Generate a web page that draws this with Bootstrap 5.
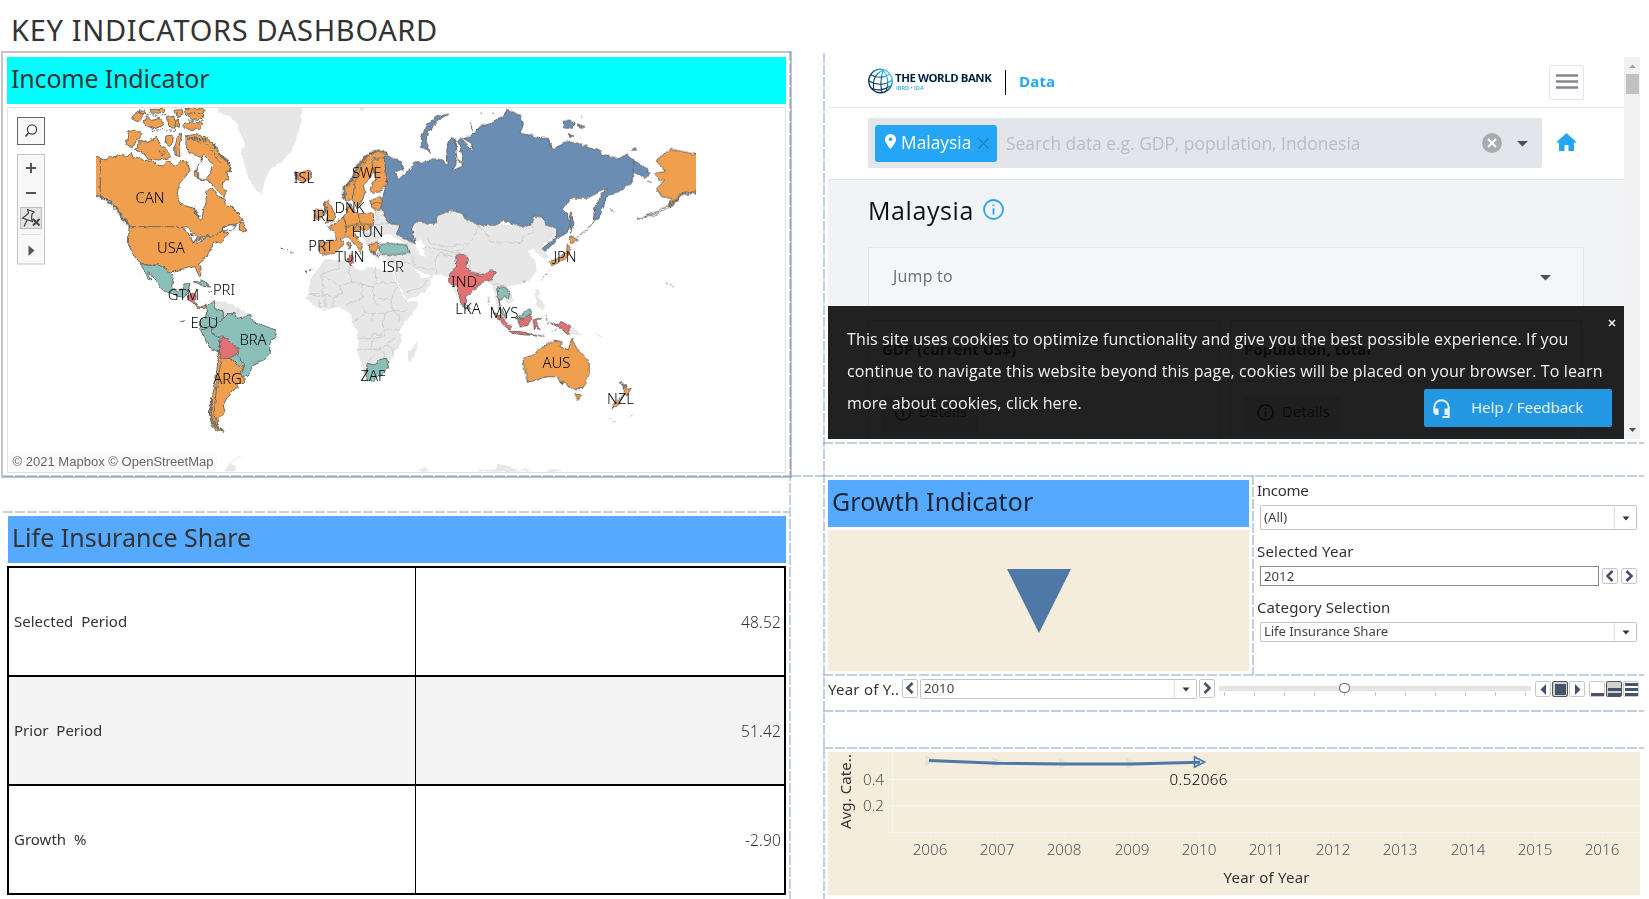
<!DOCTYPE html>
<html lang="en">
<head>
<meta charset="utf-8">
<title>Key Indicators Dashboard</title>
<link href="https://cdn.jsdelivr.net/npm/bootstrap@5.3.0/dist/css/bootstrap.min.css" rel="stylesheet">
<style>
  body { font-family: "Noto Sans", "Open Sans", sans-serif; color: #333; background: #fff; overflow: hidden; height: 899px; line-height: 1.2; }
  .page-title { font-size: 29px; height: 51px; padding: 12px 0 0 11px; margin: 0; font-weight: 400; line-height: 35px; white-space: nowrap; letter-spacing: .68px; }
  .board { display: grid; grid-template-columns: 789px 36px 1fr; height: 848px; }
  .dash-h { height: 2px; flex: none; background: repeating-linear-gradient(90deg, rgba(70,112,175,.33) 0 10px, transparent 10px 12px); }
  .dash-v { width: 2px; background: repeating-linear-gradient(180deg, rgba(70,112,175,.33) 0 10px, transparent 10px 12px); }
  .map-panel { width: 791px; height: 427px; margin-left: 1px; border: 2px solid #c3c5c8; padding: 4px 4px 0; flex: none; }
  .band { height: 47px; font-size: 25px; line-height: 43px; padding-left: 4px; white-space: nowrap; flex: none; }
  .band-cyan { background: #0ff; letter-spacing: -.18px; }
  .band-blue { background: #55a9ff; }
  .map-frame { height: 366px; margin-top: 3px; border: 1px solid #e2e2e2; display: block; width: 779px; }
  .life { margin: 3px 3px 0 8px; }
  .life-table { margin: 3px 3px 0 7px; width: 779px; border: 2px solid #000; font-size: 15px; flex: none; }
  .life-row { height: 109px; border-bottom: 2px solid #000; line-height: 107px; }
  .life-row:last-child { border-bottom: 0; height: 107px; }
  .life-row:nth-child(2) { background: #f4f4f4; }
  .life-name { width: 407px; border-right: 1px solid #000; padding-left: 5px; word-spacing: 4px; }
  .life-num { padding-right: 3px; font-weight: 300; color: #333; font-size: 15.5px; letter-spacing: .15px; line-height: 109px; }
  .right { padding-left: 3px; }
  .right > .dash-h { margin-left: -5px; margin-right: 5px; }
  .frame { height: 382px; margin-top: 6px; width: 812px; font-family: "Open Sans", sans-serif; flex: none; }
  .site { width: 796px; background: #f1f3f7; overflow: hidden; }
  .bar { width: 16px; background: #f1f1f1; }
  .thumb { width: 13px; height: 20px; background: #c1c1c1; margin-left: 2px; }
  .site-head { height: 51px; background: #fff; border-bottom: 1px solid #e3e6ea; padding: 0 40px; }
  .brand { font-size: 11.4px; font-weight: 700; color: #002244; line-height: 12px; white-space: nowrap; letter-spacing: -.44px; width: 95px; }
  .brand-sub { font-size: 5.6px; line-height: 6px; color: #2aa8e0; font-weight: 600; padding-left: 1px; }
  .rule { width: 1px; height: 25px; background: #000; margin-left: 15px; margin-right: 13px; }
  .data-link { font-size: 15px; font-weight: 700; color: #25a5f6; margin-top: -2px; letter-spacing: .15px; }
  .burger { width: 35px; height: 35px; border: 1px solid #e3e5e8; border-radius: 2px; }
  .searchrow { height: 72px; background: #fff; border-bottom: 1px solid #e3e6ea; padding: 10px 40px 0; }
  .searchbox { width: 674px; height: 50px; background: #e2e6eb; border-radius: 2px; padding-left: 7px; }
  .tag { width: 122px; height: 37px; background: #25a5f6; color: #fff; border-radius: 3px; font-size: 17.4px; font-weight: 500; padding-left: 9px; }
  .hint { font-size: 17.4px; color: #b9bdc0; margin-left: 9px; white-space: nowrap; }
  .country { height: 67px; padding: 0 40px; font-size: 25px; font-weight: 500; color: #111; letter-spacing: .6px; line-height: 60px; }
  .jump { margin: 0 40px; height: 59px; border: 1px solid #e3e8ec; border-bottom: 0; background: #f5f6f9; font-size: 16px; color: #666c70; padding: 0 32px 0 24px; border-radius: 2px 2px 0 0; line-height: 56px; letter-spacing: .25px; }
  .cookie { height: 134px; background: #212121; color: #f3f3f3; position: relative; font-size: 16px; }
  .cookie p { position: relative; margin: 0; padding: 17px 0 0 19px; line-height: 32px; white-space: nowrap; font-weight: 500; letter-spacing: .128px; }
  .under { position: absolute; inset: 0; }
  .help { position: absolute; right: 12px; bottom: 13px; width: 188px; height: 38px; background: #2497e2; border-radius: 2px; color: #eaf4fb; font-size: 15px; font-weight: 500; line-height: 37px; padding-left: 47px; }
  .help svg { position: absolute; left: 9px; top: 10px; }
  .growth { width: 421px; }
  .sand { background: #f4eddb; }
  .side { width: 392px; font-size: 15px; }
  .field-label { height: 21px; line-height: 21px; padding-left: 3px; }
  .pick { border: 1px solid #c6c6c6; border-radius: 2px; font-size: 13.2px; color: #444; background: #fff; padding-left: 3px; }
  .pick .drop { width: 22px; border-left: 1px solid #dedede; }
  .step { width: 16px; height: 16px; border: 1px solid #c6c6c6; border-radius: 2px; flex: none; display: block; }
  .yearrow { height: 34px; font-size: 15px; }
  svg text { font-family: "Noto Sans", sans-serif; }
  .lbl { font-size: 14.8px; fill: #000; font-weight: 300; text-anchor: middle; }
  .axis { font-size: 15.2px; font-weight: 300; fill: #555; text-anchor: middle; }
  .ctry path { stroke: #6b6b68; stroke-width: 3; stroke-linejoin: round; }
  .o { fill: #f09f4f; } .t { fill: #8bbfba; } .r { fill: #e37173; } .b { fill: #6b8db3; }
  .ctry path.w { fill: #fff; }
  .ctry path.ln { fill: none; }
  .ctry path.jag { fill: none; stroke-width: 9; stroke-dasharray: 6 2; }
  .land path { fill: #e7e7e7; }
  .land path.ln { fill: none; stroke: #c6c6c6; stroke-width: 2.4; }
  .land path.w { fill: #fff; }
</style>
</head>
<body>
<h1 class="page-title">KEY INDICATORS DASHBOARD</h1>
<main class="board">
  <section class="d-flex flex-column">
    <div class="map-panel">
      <div class="band band-cyan">Income Indicator</div>
      <svg class="map-frame" viewBox="8 108 777 364">
        <defs>
          <filter id="coast" x="-2%" y="-2%" width="104%" height="104%">
            <feTurbulence type="fractalNoise" baseFrequency=".2" numOctaves="2" seed="4"/>
            <feDisplacementMap in="SourceGraphic" scale="4" xChannelSelector="R" yChannelSelector="G"/>
          </filter>
          <clipPath id="world"><rect x="96" y="108" width="600" height="364"/></clipPath>
        </defs>
        <g class="land" filter="url(#coast)">
          <g transform="translate(80 100) scale(.33333)">
            <path d="M412 15H668L665 60 655 100 645 130 625 165 600 190 570 210 555 240 545 285 525 265 505 235 495 200 485 160 495 130 480 100 470 70 445 48 415 40zM835 15h20l-10 22z"/>
            <path d="M400 602 430 605 460 615 500 635 512 645 465 655 430 655 405 625z"/>
            <path class="ln" d="M433 655 430 635 465 655 475 635"/>
          </g>
          <g transform="translate(290 230) scale(.33333)">
            <path d="M85 115 105 88 150 90 175 85 190 110 215 125 235 110 310 125 320 160 335 190 350 215 385 212 375 240 345 275 330 300 335 335 310 375 298 400 290 420 270 440 235 455 222 440 215 400 200 360 205 310 185 275 185 255 150 230 105 240 80 235 50 205 55 180 65 140z"/>
            <path d="M380 335 383 350 365 400 352 395 355 365 370 350z"/>
            <path d="M837 285 860 300 882 320 850 312 837 312zM735 180l10 0 5 30 15 15-8 18-15-20-8-25zM905 305l35 15-5 4zM955 375l15 10zM385 724 395 715 410 715 418 724zM555 724l15-5 45 0 5-14 10-2 20 5 25 10 20 8zM690 724l10-8 10-3 12 11zM765 724l20-8 35 8z"/>
            <path class="ln" d="M145 90 150 115 125 120 95 135 100 190 60 192M100 135 150 170 155 190 130 200 128 230M150 170 185 153 215 163 218 205 165 225M185 153 175 110 190 110M215 163 250 172 252 215 265 225M257 110V158H320M215 163H232M250 172 257 158M265 205 300 210 320 170M300 210 310 240 290 250 250 250 245 270M310 240 350 245M218 225 225 250 205 265 185 275M225 250 250 250 M285 250 280 285 285 320 250 310 240 325 200 325M285 320 250 325 240 358 192 358M240 358H268L290 345 320 320M268 358 230 400M268 358 285 370 280 385M285 300 330 300M310 240 330 260 325 280M60 192 85 200 105 195 130 200M105 195 105 235M85 200 90 235M290 345 305 350 310 375"/>
          </g>
          <g transform="translate(290 100) scale(.33333)">
            <path d="M315 490 375 495 415 530 425 545 410 575 350 598 330 560z"/>
            <path d="M250 335 275 325 300 350 330 370 375 365 435 370 440 350 480 330 530 360 570 375 720 375 745 345 790 380 800 410 760 428 765 455 775 475 758 475 735 450 715 450 720 465 735 480 740 510 720 540 690 552 650 560 665 580 672 600 655 612 640 595 625 610 632 640 620 620 615 580 600 550 560 530 530 590 500 590 480 540 440 520 425 535 400 530 370 505 340 500 300 495 285 470 240 460 225 425 215 395 250 375z"/>
            <path class="w" d="M262 430 275 408 300 402 318 412 345 432 300 430zM372 425 395 420 405 440 395 445 408 470 388 465 378 440zM372 498 395 518 425 528 400 535 380 515z"/>
            <path class="ln" d="M250 375 300 370 325 375M255 335 265 355 250 365M568 380 590 405 600 425 690 430 700 410 730 395 725 375M568 380 550 410 530 440 500 455 520 465M405 440 430 445 460 450 500 460M440 520 435 480 450 460 490 470M410 405 420 430 470 440 530 430M365 470 375 500 430 510M310 500 330 560 M300 480 360 490M350 575 400 560 410 540M535 475 545 520 560 525M600 550 625 555 650 560M645 560 665 590 655 600M790 425 770 440M215 410 245 400 265 420M230 430 250 395"/>
          </g>
        </g>
        <g clip-path="url(#world)"><g class="ctry" filter="url(#coast)">
          <g transform="translate(80 100) scale(.33333)">
            <path class="o" d="M25 163 60 172 78 180 90 170 100 172 125 163 140 172 152 160 160 174 180 172 192 185 215 182 228 195 250 198 262 185 275 190 285 200 300 185 322 185 330 212 312 235 298 250 290 290 300 312 340 325 352 355 365 360 370 330 378 310 380 275 395 262 415 290 435 298 440 315 455 320 480 345 488 362 470 372 440 375 420 392 448 398 425 425 400 430 390 450 380 470 355 490 365 525 358 530 345 500 320 505 285 512 270 520 255 505 235 495 205 495 185 490 165 475 155 455 145 430 147 385 150 378 130 355 110 330 90 305 70 290 25 283z"/>
            <path class="o" d="M318 108 345 103 375 110 400 132 415 160 440 180 455 215 440 215 447 240 430 245 425 262 440 275 430 292 410 268 385 240 360 238 345 225 352 205 372 215 385 208 392 195 370 175 345 165 328 160 318 140z"/>
            <path class="w" d="M352 200 370 165 382 175 398 195 390 222 375 240 352 235z"/>
            <path class="o" d="M178 120 200 127 230 112 245 140 262 150 272 172 250 178 235 180 205 178 190 160 163 148 175 142zM145 95 165 90 188 102 170 120 160 140 138 135zM258 108 280 105 278 130 268 140 255 128zM284 140 295 105 305 100 298 135 300 170 285 165zM155 50 175 35 190 42 180 65 163 62zM190 68 200 50 215 62 238 55 252 75 225 86 205 80zM305 72 330 65 368 70 360 88 320 88zM315 25 372 25 370 55 340 58 320 45zM262 50l15-5 10 20-2 20-18-3zM178 30h15l5 10-18 2zM210 28h45l-5 10-35 2zM285 30h20l5 14-18 10zM240 150l15 8-8 10zM290 60l8 0 0 22-8 0z"/>
            <path class="ln" stroke-dasharray="9 4" d="M200 44 240 48 262 42M215 92 250 88 290 92M320 60 370 62M325 42 368 40M375 130 395 150 420 190M335 120 365 130"/>
            <path class="o" d="M478 372 490 368 500 395 478 390zM344 212l12 6 0 16-12-6z"/>
            <path class="w" d="M308 385 325 382 335 395 330 405 345 400 352 410 340 432 332 410 318 395zM352 418 385 405 378 414 355 428zM425 392 440 376 468 374 455 392z"/>
            <path class="ln" d="M61 172V288M147 380H290L320 392M340 425 385 410 410 405 430 385"/>
            <path class="jag" d="M64 290 90 307 110 330 130 355 148 378M400 132 420 165 445 185 452 215M325 115 380 120M340 325l15 25"/>
            <path class="ln" stroke-dasharray="6 8" d="M605 445 640 460M675 515 705 505M170 508 180 520"/>
            <path class="t" d="M180 490 205 497 235 495 255 505 270 520 280 530 275 560 290 572 305 570 312 552 330 550 325 570 315 590 300 590 280 582 255 575 238 560 228 540 205 515 215 543 205 535z"/>
            <path class="t" d="M340 545 365 543 392 558 368 556z"/><path class="ln" d="M300 665 315 662M385 575 400 578"/>
            <path class="r" d="M318 590 345 578 350 600 340 608 325 600z"/>
            <path class="o" d="M342 608 360 622 378 615 375 625 355 626z"/>
            <path class="t" d="M378 620 402 600 407 625 430 635 430 655 402 680 396 700 420 715 418 755 390 745 375 715 358 685 360 665 380 645z"/>
            <path class="t" d="M430 655 450 640 465 640 468 655 500 650 510 642 520 665 560 680 588 690 588 705 570 730 568 760 555 778 525 790 510 820 495 832 480 822 495 800 475 795 470 770 475 750 455 730 430 712 415 710 395 700 400 680z"/>
            <path class="o" d="M416 752 425 775 450 775 460 785 480 800 492 800 480 822 497 837 485 850 465 850 475 865 455 872 450 885 440 895 430 915 435 935 415 955 410 970 425 990 432 997 410 992 395 975 388 940 395 900 405 850 412 800z"/>
            <path class="t" d="M450 775 460 762 475 770 495 795 490 802 475 798z"/>
            <path class="r" d="M420 715 432 712 455 730 476 750 468 762 450 775 425 775 418 750z"/>
            <path class="ln" d="M378 645 410 660M365 690 395 680M425 775 415 830 408 880 402 940 410 970"/>
            <path class="jag" d="M395 895 392 940 400 972 430 994"/>
            <path class="t" d="M862 790 885 795 900 778 920 775 925 800 905 825 880 842 862 845 858 820z"/>
          </g>
          <g transform="translate(290 100) scale(.33333)">
            <path class="b" d="M275 165 300 170 330 185 340 210 312 215 325 238 345 225 365 200 375 185 400 190 430 175 455 180 475 195 470 150 485 110 497 120 500 180 520 190 505 120 540 110 570 80 600 70 640 50 650 28 690 45 700 70 690 100 720 105 750 115 775 115 785 150 830 125 870 130 900 145 930 150 935 165 985 175 1010 165 1030 180 1070 205 1080 220 1065 235 1030 215 1025 250 985 275 950 290 940 320 925 355 910 360 915 320 935 285 950 265 920 280 890 295 840 295 815 330 835 345 840 375 830 400 800 415 790 430 765 455 757 445 800 410 800 385 770 375 755 350 735 348 725 375 690 378 640 360 620 375 570 375 530 360 515 340 480 330 440 350 435 370 375 365 365 385 375 430 340 415 320 400 330 375 300 370 285 350 275 325 270 310 280 285 290 250 285 215 280 190z"/>
            <path class="b" d="M477 42 440 65 415 95 410 135 425 160 395 140 395 110 410 75 440 50zM820 65 838 60 855 68 850 85 820 80zM862 72 885 80 870 85zM835 100l14 8-10 4zM1023 150 1035 143 1043 150zM843 335 852 370 845 400 840 370z"/>
            <path class="w" d="M497 125 505 185 520 190 515 200 485 212 498 195zM510 110 545 130 548 150 525 130z"/>
            <path class="ln" d="M1030 180V220M920 355 895 385 860 412M545 65V90M575 40h4M610 40h5M960 330l10 4M875 48v6"/>
            <path class="o" d="M1245 165 1218 163 1145 148 1115 165 1100 185 1120 205 1125 215 1095 220 1105 240 1128 240 1100 265 1115 290 1145 295 1135 315 1150 315 1170 290 1190 275 1245 283z"/>
            <path class="ln" d="M1138 312 1100 335 1040 358 1105 340 1150 315M1070 245l14 5"/><path class="jag" d="M1135 318 1160 300 1175 280 1218 278"/>
            <path class="o" d="M160 265 185 240 200 200 230 165 265 150 290 162 280 180 245 175 250 215 235 240 220 255 225 280 215 305 200 325 190 300 165 300z"/>
            <path class="o" d="M282 172 288 215 290 250 270 275 245 280 240 265 258 235 247 195 252 178zM243 300 272 290 276 325 262 332 245 322z"/>
            <path class="jag" d="M163 295 162 265 185 240 205 198 232 165 262 152 288 160"/>
            <path class="ln" d="M190 298 193 250 215 200 235 178M245 310 275 308"/>
            <path class="o" d="M100 305 115 300 122 322 137 347 128 365 105 368 115 345 102 325zM75 330 98 330 95 355 78 358zM15 215 35 220 60 212 65 235 40 245 15 235z"/>
            <path class="o" d="M112 380 135 372 160 350 170 335 180 310 188 335 215 340 250 338 250 375 230 390 190 392 205 420 220 440 212 462 190 425 170 405 150 418 165 425 140 455 105 465 88 458 90 425 140 420 135 395zM235 435 262 428 265 445 250 462 240 455zM174 430l8-2-1 18-6 0z"/>
            <path class="ln" d="M160 350 170 380 165 400M205 340 208 370 250 375M170 380 200 372 225 390M105 425 105 462M200 372 190 392"/>
            <path class="t" d="M268 435 300 430 350 435 357 460 320 463 300 467 268 460z"/>
            <path class="jag" d="M103 305 108 330 100 345M18 217 22 235M245 455 268 470"/>
            <path class="r" d="M176 465 188 462 190 488 182 500 175 480z"/>
            <path class="r" d="M497 465 520 462 535 475 530 500 545 520 575 525 600 512 617 515 600 545 590 540 575 550 530 590 525 622 512 605 500 560 475 545 480 520 500 500zM533 615l8 12-8 4z"/>
            <path class="t" d="M620 565 640 558 660 575 655 595 640 588 628 600 630 620z"/>
            <path class="o" d="M838 420 840 408 865 420 845 430zM832 432 842 445 836 465 825 478 785 497 780 485 812 472 830 455z"/>
            <path class="ln" stroke-dasharray="6 6" d="M780 510 755 540M1128 548 1158 562M5 458h8M45 515 70 508M700 545h6"/>
          </g>
          <g transform="translate(290 230) scale(.33333)">
            <path class="t" d="M685 262 718 236 728 250 700 266zM628 232 645 250 650 268 635 255z"/>
            <path class="r" d="M610 245 635 260 662 290 660 300 640 285zM660 303 700 306 740 318 700 314 665 310zM680 265 700 267 720 252 722 270 712 288 690 288zM730 270 755 262 738 276 750 300 738 290 733 300zM780 275 800 284 812 278 837 285 837 314 820 300 800 290z"/>
            <path class="ln" stroke-dasharray="7 4" d="M735 318 765 315M740 312 760 322M768 255 772 285M785 305 805 298M597 200 595 225"/>
            <path class="o" d="M700 385 730 375 755 350 775 345 790 330 815 335 810 350 835 360 845 327 860 355 885 380 898 400 898 430 880 475 845 478 825 455 815 460 800 440 770 440 740 450 712 457 700 400zM855 492 873 495 865 512zM1000 462 1012 478 1023 475 1012 495 1000 488zM998 493 985 525 970 534 965 527 985 510z"/>
            <path class="jag" d="M993 455 1008 475M815 460l8-6"/><path class="ln" stroke-dasharray="3 12" d="M961 564 977 580M1023 556h3"/>
          </g>
        </g></g>
        <g class="lbl">
          <text x="150" y="202.500">CAN</text><text x="171" y="253">USA</text><text x="183.500" y="299.500">GTM</text><text x="224" y="295">PRI</text><text x="204.500" y="328">ECU</text><text x="253" y="345">BRA</text><text x="227.500" y="384">ARG</text><text x="304" y="182.700">ISL</text><text x="366.700" y="178">SWE</text><text x="349.500" y="213">DNK</text><text x="322.500" y="221">IRL</text><text x="367.500" y="237">HUN</text><text x="321" y="251">PRT</text><text x="350" y="262">TUN</text><text x="393" y="272">ISR</text><text x="565" y="262">JPN</text><text x="464" y="286.500">IND</text><text x="468" y="314">LKA</text><text x="504" y="318">MYS</text><text x="556.500" y="367.500">AUS</text><text x="620.500" y="403.500">NZL</text><text x="373" y="381">ZAF</text>
        </g>
        <path d="M225 471l5-8 5 4v4zM231 462l10-6" fill="#e7e7e7" stroke="#e7e7e7"/>
        <rect x="10" y="452" width="207" height="17" fill="#fafafa"/>
        <text x="12.500" y="465.500" font-size="13" fill="#666" textLength="201" style="font-family:'Liberation Sans',sans-serif">© 2021 Mapbox © OpenStreetMap</text>
        <rect x="17.500" y="117.500" width="27" height="27" fill="#f8f8f8" stroke="#666"/>
        <circle cx="32" cy="129.500" r="4.600" fill="none" stroke="#444" stroke-width="1.300"/><path d="M28.600 133 25.500 136.500" stroke="#444" stroke-width="1.600"/>
        <rect x="17.500" y="154.500" width="27" height="109.500" fill="#f8f8f8" stroke="#c4c4c4"/>
        <path d="M26 168h10M31 163v10M26 193h10" stroke="#555" stroke-width="2" fill="none"/>
        <rect x="20.500" y="207.500" width="21" height="21" fill="#e4e4e4" stroke="#bbb"/>
        <path d="M27.500 209.500 34 212 32 214 31.500 218 32.500 221.500 22.500 218 26 215.500 28.500 213zM27 220 24 226.500" fill="none" stroke="#444" stroke-width="1.200"/><path d="M33 219 39.500 225.500M39.500 219 33 225.500" stroke="#444" stroke-width="2"/>
        <path d="M21 234.500H41" stroke="#ddd"/><path d="M28.500 245.500 34.500 250.500 28.500 256z" fill="#555"/>
      </svg>
    </div>
    <div class="dash-h" style="margin:-3px 0 0 3px"></div>
    <div class="dash-h" style="margin:34px 0 0 3px"></div>
    <div class="band band-blue life">Life Insurance Share</div>
    <div class="life-table">
      <div class="life-row d-flex"><div class="life-name">Selected Period</div><div class="life-num ms-auto">48.52</div></div>
      <div class="life-row d-flex"><div class="life-name">Prior Period</div><div class="life-num ms-auto">51.42</div></div>
      <div class="life-row d-flex"><div class="life-name">Growth %</div><div class="life-num ms-auto">-2.90</div></div>
    </div>
  </section>

  <div class="d-flex justify-content-between">
    <div class="dash-v"></div>
    <div class="flex-fill"><div class="dash-h" style="margin-top:424px"></div></div>
    <div class="dash-v" style="margin-top:2px"></div>
  </div>

  <section class="right d-flex flex-column">
    <div class="frame d-flex">
      <div class="site">
        <div class="site-head d-flex align-items-center">
          <svg width="25" height="26" viewBox="0 0 25 26" fill="none" style="margin-top:-2px"><defs><linearGradient id="gl" x1="0" y1="1" x2="1" y2="0"><stop offset=".4" stop-color="#0a3557"/><stop offset=".7" stop-color="#1c9fd8"/><stop offset="1" stop-color="#a5def5"/></linearGradient></defs><g stroke="url(#gl)" stroke-width="1.100"><circle cx="12.500" cy="13" r="11.700" stroke-width="1.400"/><path d="M15 2C7 6 4 13 6 22M15 2C13 9 12 17 14 24.500M15 2C20 8 21 16 18 23M3 7C9 10 17 10 22 6M1 13C9 18 18 17 24 12M4 20.500C10 23 16 22 22 18"/></g></svg>
          <div style="margin-left:2px;margin-top:-2px"><div class="brand">THE WORLD BANK</div><div class="brand-sub" style="margin-top:1px">IBRD • IDA</div></div>
          <div class="rule"></div><div class="data-link">Data</div>
          <div class="burger ms-auto"><svg width="33" height="33" viewBox="0 0 33 33" style="display:block"><path d="M6 9.500H28M6 15.500H28M6 21.500H28" stroke="#83868f" stroke-width="2.600"/></svg></div>
        </div>
        <div class="searchrow d-flex">
          <div class="searchbox d-flex align-items-center">
            <div class="tag d-flex align-items-center"><svg width="13" height="17" viewBox="0 0 13 17" style="margin-top:-3px"><path d="M6.500 1A5.300 5.300 0 0 0 1 6.500C1 10 6.500 16 6.500 16S12 10 12 6.500A5.300 5.300 0 0 0 6.500 1z" fill="#fff"/><circle cx="6.500" cy="6.300" r="1.800" fill="#25a5f6"/></svg><span style="margin:-2px 0 0 4px">Malaysia</span><svg style="margin-left:7px" width="11" height="11" viewBox="0 0 11 11"><path d="M.5.500l10 10M10.500.500l-10 10" stroke="#1c7fc0" stroke-width="1.100"/></svg></div>
            <div class="hint">Search data e.g. GDP, population, Indonesia</div>
            <svg class="ms-auto" width="20" height="20" viewBox="0 0 20 20"><circle cx="10" cy="10" r="10" fill="#a9abae"/><path d="M6 6l8 8M14 6l-8 8" stroke="#fff" stroke-width="2"/></svg>
            <svg width="11" height="6" viewBox="0 0 11 6" style="margin:1px 14px 0 15px"><path d="M0 0H11L5.500 5.500z" fill="#4a5256"/></svg>
          </div>
          <svg width="21" height="19" viewBox="0 0 21 19" style="margin:15px 0 0 14px"><path d="M10.500 0 0 9.500H3V18H8.500V12H12.500V18H18V9.500H21z" fill="#25a5f6"/></svg>
        </div>
        <div class="country d-flex">Malaysia<svg width="21" height="21" viewBox="0 0 21 21" style="margin:19px 0 0 9px"><circle cx="10.500" cy="10.500" r="9.500" fill="none" stroke="#25a5f6" stroke-width="1.800"/><path d="M10.500 5.500v1.800M10.500 9.300v6.200" stroke="#25a5f6" stroke-width="1.800"/></svg></div>
        <div class="jump d-flex justify-content-between">Jump to<svg width="11" height="6" viewBox="0 0 11 6" style="margin-top:27px"><path d="M0 0H11L5.500 5.500z" fill="#4a5256"/></svg></div>
        <div class="cookie">
          <svg class="under" width="796" height="133" viewBox="828 306 796 133"><g fill="none" stroke="#1d1d1d"><path d="M868.500 439V320.500H1219.500V439M868.500 381.500H1219.500M1230.500 439V320.500H1581.500V439M1230.500 381.500H1581.500"/></g><g fill="#1f1f1f"><rect x="882" y="396" width="96" height="36" rx="2"/><rect x="1244" y="396" width="96" height="36" rx="2"/></g><g fill="#0b0b0b" font-size="15" font-weight="700"><text x="882" y="355" textLength="134" style="font-family:'Open Sans'">GDP (current US$)</text><text x="1244" y="355" textLength="127" style="font-family:'Open Sans'">Population, total</text></g><g fill="#0b0b0b" font-size="15"><text x="919" y="417" textLength="48" style="font-family:'Open Sans'">Details</text><text x="1282" y="417" textLength="48" style="font-family:'Open Sans'">Details</text></g><g fill="none" stroke="#0b0b0b" stroke-width="1.600"><circle cx="903" cy="412.500" r="7.500"/><circle cx="1265.500" cy="412.500" r="7.500"/><path d="M903 408v1.500M903 411v5.500M1265.500 408v1.500M1265.500 411v5.500"/></g></svg>
          <p>This site uses cookies to optimize functionality and give you the best possible experience. If you<br>continue to navigate this website beyond this page, cookies will be placed on your browser. To learn<br>more about cookies, click here.</p>
          <svg width="8" height="8" viewBox="0 0 8 8" style="position:absolute;right:8px;top:13px"><path d="M1 1l6 6M7 1 1 7" stroke="#eee" stroke-width="1.700"/></svg>
          <div class="help"><svg width="17" height="20" viewBox="0 0 17 20"><path d="M1.300 14V8.500a7.200 7.200 0 0 1 14.400 0V18H9.500" fill="none" stroke="#e8f2f9" stroke-width="2"/><path d="M1 9.500H5.500V16H3A2 2 0 0 1 1 14zM11.500 9.500H16V16H11.500z" fill="#e8f2f9"/></svg>Help / Feedback</div>
        </div>
      </div>
      <div class="bar d-flex flex-column"><svg width="16" height="17" viewBox="0 0 16 17"><path d="M5 11 8.500 7.500 12 11z" fill="#a3a3a3"/></svg><div class="thumb"></div><svg class="mt-auto" width="16" height="17" viewBox="0 0 16 17"><path d="M5 6H12L8.500 10z" fill="#505050"/></svg></div>
    </div>
    <div class="dash-h" style="margin-top:3px"></div>
    <div class="dash-h" style="margin-top:31px"></div>
    <div class="d-flex" style="height:197px">
      <div class="growth" style="padding-top:3px">
        <div class="band band-blue" style="color:#1a2433;letter-spacing:.12px">Growth Indicator</div>
        <svg class="sand d-block" style="margin-top:3px" width="421" height="141" viewBox="828 530 421 141"><path d="M1007 569H1071L1039 633z" fill="#4e79a7"/></svg>
      </div>
      <div class="dash-v" style="margin:-2px 0 0 3px;height:200px"></div>
      <div class="side">
        <div class="field-label" style="margin-top:3px;letter-spacing:-.3px">Income</div>
        <div class="pick d-flex align-items-center" style="margin:4px 9px 0 6px;height:25px;padding-top:1px">(All)<div class="drop ms-auto h-100 d-flex align-items-center justify-content-center"><svg width="8" height="5" viewBox="0 0 8 5"><path d="M.5.500h7L4 4.500z" fill="#333"/></svg></div></div>
        <div class="field-label" style="margin-top:11px;letter-spacing:.2px">Selected Year</div>
        <div class="d-flex align-items-center" style="margin:4px 9px 0 6px;gap:3px">
          <div class="pick flex-fill d-flex align-items-center" style="height:20px;border-color:#888;border-radius:0;padding-top:1px">2012</div>
          <svg class="step" viewBox="0 0 14 14"><path d="M9.500 2 4.500 7 9.500 12" fill="none" stroke="#455468" stroke-width="2.600"/></svg>
          <svg class="step" viewBox="0 0 14 14"><path d="M4.500 2 9.500 7 4.500 12" fill="none" stroke="#455468" stroke-width="2.600"/></svg>
        </div>
        <div class="field-label" style="margin-top:11px;letter-spacing:.1px">Category Selection</div>
        <div class="pick d-flex align-items-center" style="margin:4px 9px 0 6px;height:20px;letter-spacing:-.1px">Life Insurance Share<div class="drop ms-auto h-100 d-flex align-items-center justify-content-center"><svg width="8" height="5" viewBox="0 0 8 5"><path d="M.5.500h7L4 4.500z" fill="#333"/></svg></div></div>
      </div>
    </div>
    <div class="dash-h"></div>
    <div class="yearrow d-flex">
      <div style="width:74px;line-height:27px;white-space:nowrap;letter-spacing:.25px">Year of Y..</div>
      <svg class="step" style="margin:3px 2px 0 0;height:19px" viewBox="0 0 14 17"><path d="M9.500 3 4.500 8 9.500 13" fill="none" stroke="#455468" stroke-width="2.600"/></svg>
      <div class="pick d-flex align-items-center" style="width:277px;height:20px;margin-top:3px">2010<div class="drop ms-auto h-100 d-flex align-items-center justify-content-center"><svg width="8" height="5" viewBox="0 0 8 5"><path d="M.5.500h7L4 4.500z" fill="#333"/></svg></div></div>
      <svg class="step" style="margin:3px 0 0 2px;height:19px" viewBox="0 0 14 17"><path d="M4.500 3 9.500 8 4.500 13" fill="none" stroke="#455468" stroke-width="2.600"/></svg>
      <svg width="425" height="34" viewBox="1215 676 425 34">
        <rect x="1219" y="686" width="312" height="5" fill="#e4e4e4"/>
        <path d="M1224.500 692v4M1254.500 692v4M1284.500 692v4M1314.500 692v4M1344.500 692v4M1375.500 692v4M1405.500 692v4M1435.500 692v4M1465.500 692v4M1495.500 692v4M1525.500 692v4" stroke="#c4c4c4"/>
        <rect x="1339.500" y="683.500" width="10" height="9" rx="4" fill="#fff" stroke="#555"/>
        <g fill="#fff" stroke="#c8c8c8"><rect x="1535.500" y="681.500" width="15" height="15" rx="1.500"/><rect x="1552.500" y="681.500" width="15" height="15" rx="1.500" fill="#d2d2d2" stroke="#555"/><rect x="1569.500" y="681.500" width="15" height="15" rx="1.500"/><rect x="1589.500" y="681.500" width="15" height="15" rx="1.500"/><rect x="1606.500" y="681.500" width="15" height="15" rx="1.500" fill="#d2d2d2" stroke="#555"/><rect x="1623.500" y="681.500" width="15" height="15" rx="1.500"/></g>
        <path d="M1546 684v11l-5.500-5.500zM1555 684h11v11h-11zM1575 684v11l5.500-5.500zM1591 693h13v3h-13zM1608 688h13v3h-13zM1608 693h13v3h-13zM1625 683h13v3h-13zM1625 688h13v3h-13zM1625 693h13v3h-13z" fill="#455468"/>
      </svg>
    </div>
    <div class="dash-h"></div>
    <div class="dash-h" style="margin-top:35px"></div>
    <svg class="sand d-block flex-shrink-0" style="margin-top:3px" width="812" height="143" viewBox="828 752 812 143">
      <path d="M888 779.500H1640M888 805.500H1640M888 832.500H1640M892.500 752V832M930.500 832v5M997.500 832v5M1064.500 832v5M1132.500 832v5M1199.500 832v5M1266.500 832v5M1333.500 832v5M1400.500 832v5M1468.500 832v5M1535.500 832v5M1602.500 832v5" stroke="#f3f3f3" fill="none"/>
      <g fill="#e8e4d9" stroke="#e2e0d8" stroke-width="1.300"><path d="M926 756v9l9-4.500zM993 758v9l9-4.500zM1060 759v9l9-4.500zM1127 759v9l9-4.500z"/></g>
      <path d="M929 760.500 997 763.200 1064 764 1132 764 1200 762.200" fill="none" stroke="#4e79a7" stroke-width="3"/>
      <path d="M1194.500 757v10l10-5z" fill="none" stroke="#4e79a7" stroke-width="1.700"/>
      <text x="1198.500" y="785" font-size="15.200" fill="#000" text-anchor="middle" textLength="58" font-weight="300">0.52066</text>
      <g class="axis"><text x="873.500" y="785">0.4</text><text x="873.500" y="811">0.2</text><text x="930" y="855">2006</text><text x="997" y="855">2007</text><text x="1064" y="855">2008</text><text x="1132" y="855">2009</text><text x="1199" y="855">2010</text><text x="1266" y="855">2011</text><text x="1333" y="855">2012</text><text x="1400" y="855">2013</text><text x="1468" y="855">2014</text><text x="1535" y="855">2015</text><text x="1602" y="855">2016</text></g>
      <text x="1266.500" y="883" font-size="15" fill="#333" text-anchor="middle" textLength="86">Year of Year</text>
      <text transform="translate(851 829) rotate(-90)" font-size="15" fill="#333" textLength="75">Avg. Cate..</text>
    </svg>
  </section>
</main>
<script src="https://cdn.jsdelivr.net/npm/bootstrap@5.3.0/dist/js/bootstrap.bundle.min.js"></script>
</body>
</html>
